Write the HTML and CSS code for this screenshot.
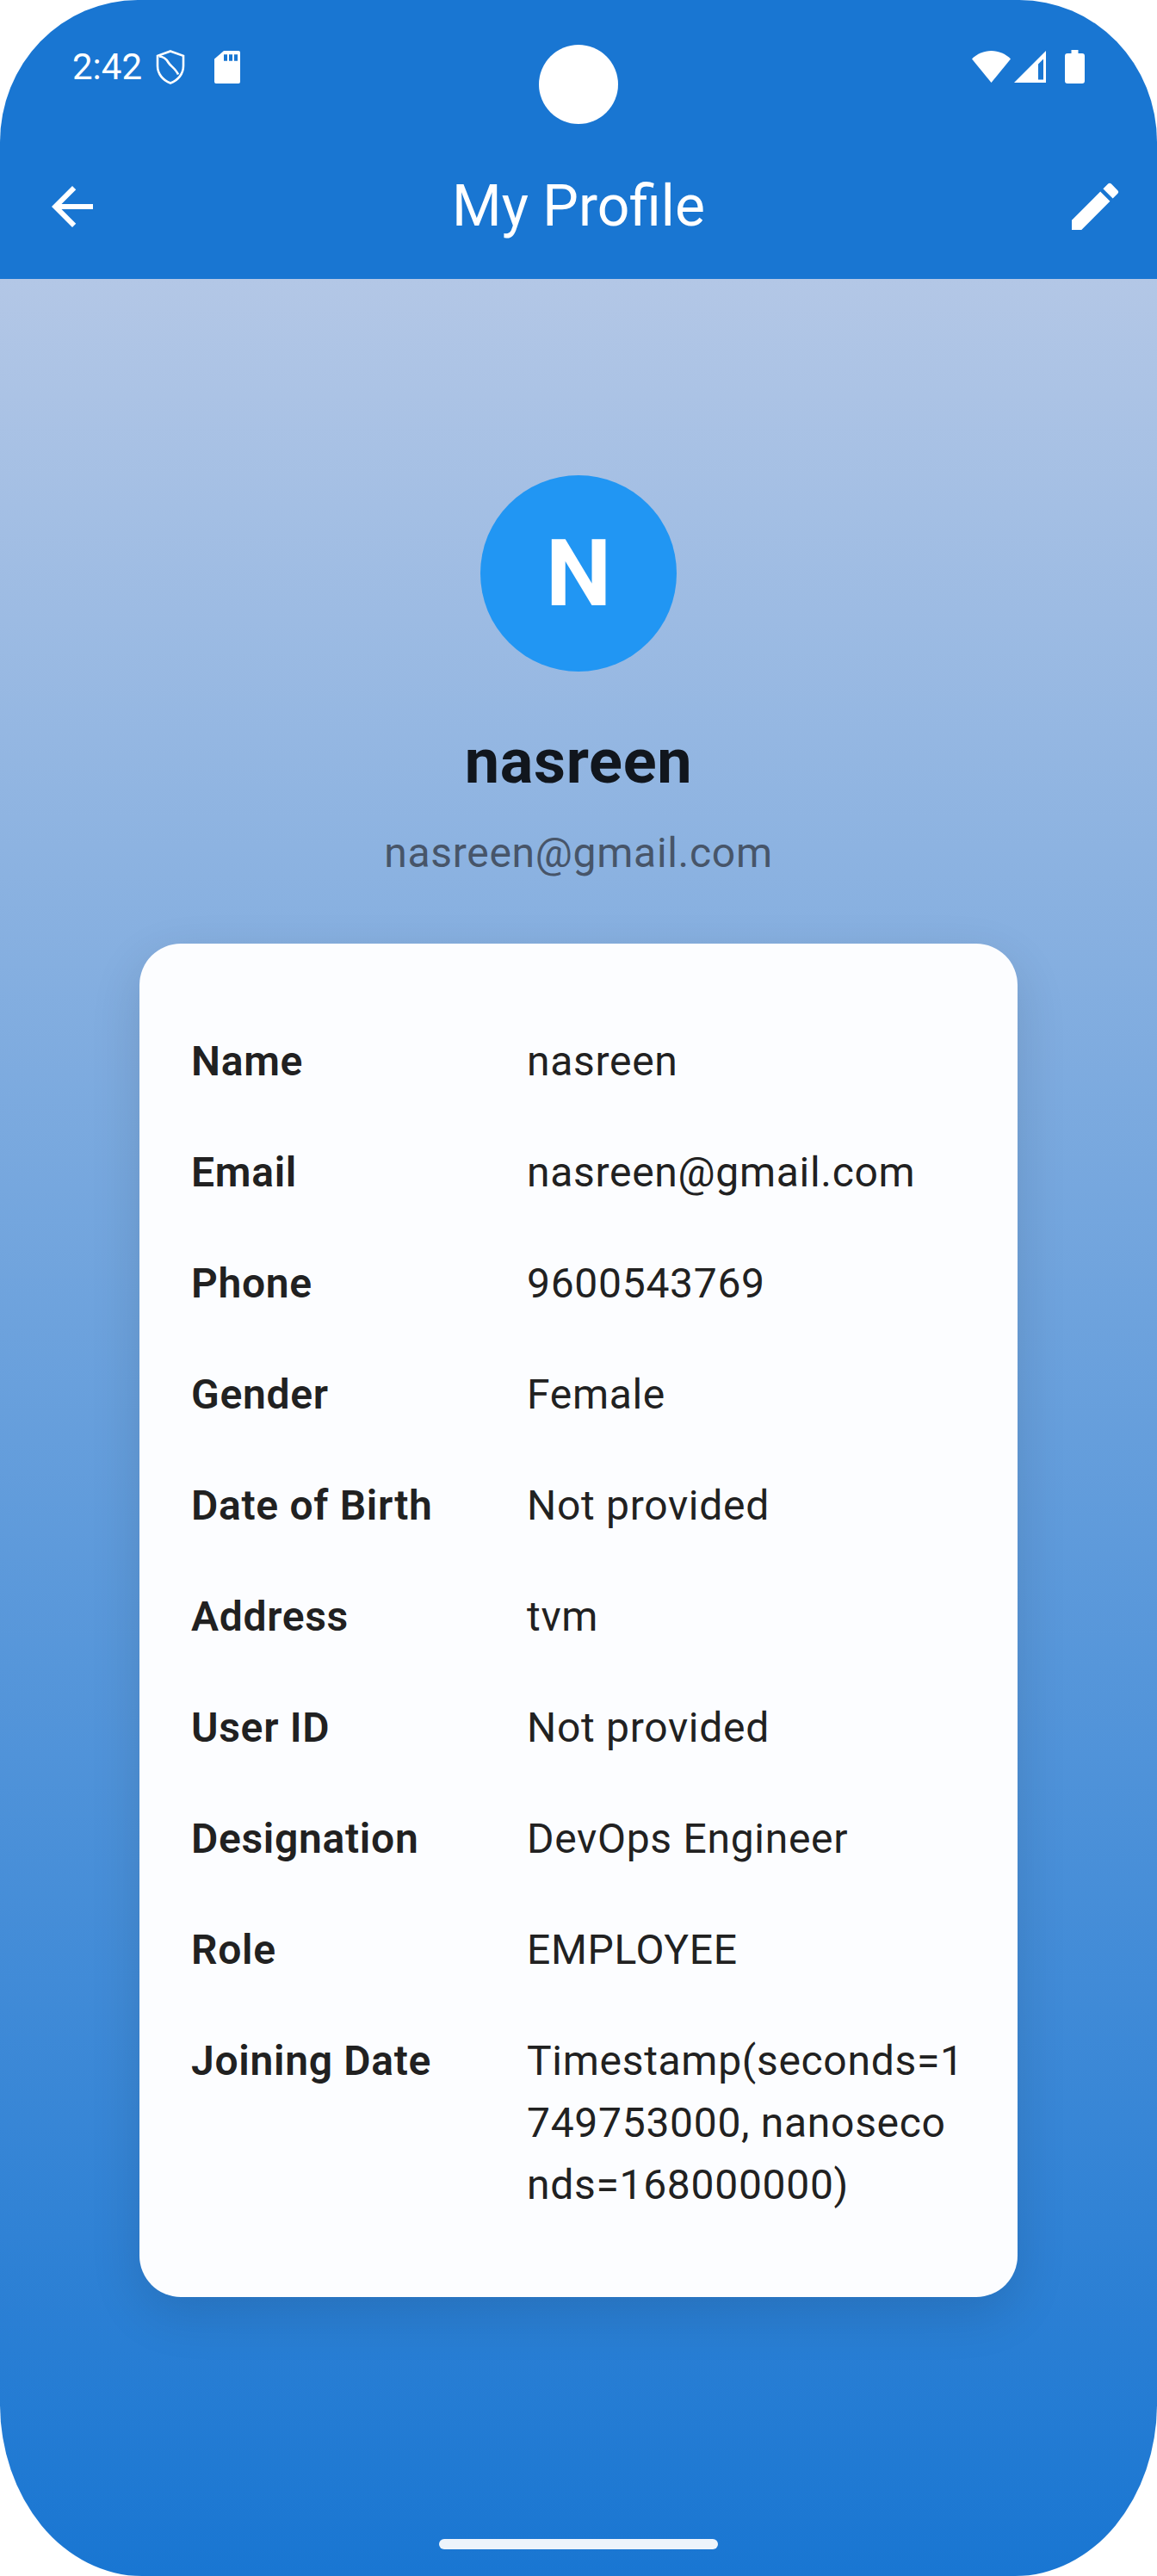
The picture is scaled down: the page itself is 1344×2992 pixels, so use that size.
FILE: index.html
```html
<!DOCTYPE html>
<html lang="en">
<head>
  <meta charset="UTF-8" />
  <title>My Profile</title>
  <link rel="stylesheet" href="styles.css">
</head>
<body>
  <div class="screen">
    <header class="topbar">
      <div class="status">
        <div class="status-left">
          <span class="time">2:42</span>
          <svg class="shield" width="34" height="40" viewBox="0 0 34 40"><path d="M17 1.500l15 5.300v11.700c0 9.500-6.300 16.800-15 20-8.700-3.200-15-10.500-15-20V6.800z M4 7.500c5 .3 8 2.500 10.500 7 2.500 4.300 8.500 7 11.500 14" fill="none" stroke="#fff" stroke-width="2.600"/></svg>
          <svg class="sd" width="30" height="38" viewBox="0 0 30 38"><path fill="#fff" fill-rule="evenodd" d="M11 0h17a2 2 0 0 1 2 2v34a2 2 0 0 1-2 2H2a2 2 0 0 1-2-2V9.500z M11 4.300v7.400h4V4.300z M17 4.300v7.400h4V4.300z M23 4.300v7.400h4V4.300z"/></svg>
        </div>
        <div class="status-right">
          <svg width="45" height="37" viewBox="0 0 45 37"><path fill="#fff" d="M0 9.500C6 3.500 14 0 22.500 0S39 3.500 45 9.500L22.500 37z"/></svg>
          <svg width="37" height="37" viewBox="0 0 37 37"><path fill="#fff" fill-rule="evenodd" d="M37 0v37H0z M34 9.500L28 15.500V33.500h6z"/></svg>
          <svg class="battery" width="23" height="39" viewBox="0 0 23 39"><path fill="#fff" d="M7.500 0h8v4H20a3 3 0 0 1 3 3v29a3 3 0 0 1-3 3H3a3 3 0 0 1-3-3V7a3 3 0 0 1 3-3h4.500z"/></svg>
        </div>
      </div>
      <div class="appbar">
        <svg width="72" height="72" viewBox="0 0 24 24"><path fill="#fff" d="M20 11H7.830l5.590-5.590L12 4l-8 8 8 8 1.410-1.410L7.830 13H20v-2z"/></svg>
        <h1>My Profile</h1>
        <svg width="72" height="72" viewBox="0 0 24 24"><path fill="#fff" d="M3 17.250V21h3.750L17.810 9.940l-3.750-3.750L3 17.250zM20.710 7.040a.996.996 0 0 0 0-1.410l-2.340-2.340a.996.996 0 0 0-1.410 0l-1.830 1.830 3.750 3.750 1.830-1.830z"/></svg>
      </div>
      <div class="camera"></div>
    </header>

    <main class="content">
      <div class="avatar">N</div>
      <h2 class="name">nasreen</h2>
      <p class="email">nasreen@gmail.com</p>

      <section class="card">
        <div class="row"><span class="label">Name</span><span class="value">nasreen</span></div>
        <div class="row"><span class="label">Email</span><span class="value">nasreen@gmail.com</span></div>
        <div class="row"><span class="label">Phone</span><span class="value">9600543769</span></div>
        <div class="row"><span class="label">Gender</span><span class="value">Female</span></div>
        <div class="row"><span class="label">Date of Birth</span><span class="value">Not provided</span></div>
        <div class="row"><span class="label">Address</span><span class="value">tvm</span></div>
        <div class="row"><span class="label">User ID</span><span class="value">Not provided</span></div>
        <div class="row"><span class="label">Designation</span><span class="value">DevOps Engineer</span></div>
        <div class="row"><span class="label">Role</span><span class="value">EMPLOYEE</span></div>
        <div class="row"><span class="label">Joining Date</span><span class="value">Timestamp(seconds=1<br>749753000, nanoseco<br>nds=168000000)</span></div>
      </section>
      <div class="home-bar"></div>
    </main>
  </div>
</body>
</html>
```

FILE: styles.css
```css
* {
  box-sizing: border-box;
}

body {
  margin: 0;
  background: #fff;
  font-family: Roboto, sans-serif;
}

.screen {
  position: relative;
  width: 1344px;
  height: 2992px;
  border-radius: 160px 160px 165px 165px / 165px 165px 200px 200px;
  overflow: hidden;
  display: flex;
  flex-direction: column;
}

.topbar {
  position: relative;
  height: 324px;
  background: #1976d2;
  color: #fff;
  flex-shrink: 0;
}

.status {
  height: 156px;
  padding: 58px 84px 0;
  display: flex;
  justify-content: space-between;
  align-items: flex-start;
}

.status-left,
.status-right {
  display: flex;
  align-items: center;
}

.time {
  font-size: 42px;
  line-height: 38px;
  margin-right: 16px;
}

.shield {
  margin-right: 34px;
}

.status-right svg {
  margin-left: 4px;
}

.status-right .battery {
  margin-left: 22px;
}

.appbar {
  height: 168px;
  padding: 0 36px 0 48px;
  display: flex;
  align-items: center;
}

.appbar h1 {
  flex: 1;
  margin: 0;
  padding-right: 12px;
  text-align: center;
  font-size: 66px;
  line-height: 76px;
  font-weight: 400;
}

.camera {
  position: absolute;
  left: 626px;
  top: 52px;
  width: 92px;
  height: 92px;
  border-radius: 50%;
  background: #fff;
}

.content {
  position: relative;
  flex: 1;
  background: linear-gradient(to bottom, #b3c7e6, #1976d2);
  padding-top: 228px;
  display: flex;
  flex-direction: column;
  align-items: center;
}

.avatar {
  width: 228px;
  height: 228px;
  border-radius: 50%;
  background: #2196f3;
  color: #fff;
  font-size: 108px;
  font-weight: 700;
  display: flex;
  align-items: center;
  justify-content: center;
}

.name {
  margin: 65px 0 0;
  font-size: 72px;
  line-height: 80px;
  font-weight: 700;
  letter-spacing: 0.7px;
  color: #11161d;
}

.email {
  margin: 36px 0 0;
  font-size: 48px;
  line-height: 60px;
  color: #475569;
  letter-spacing: 0.7px;
}

.card {
  width: 1020px;
  margin-top: 75px;
  padding: 101px 60px 94px;
  background: #fcfdff;
  border-radius: 48px;
  box-shadow: 0 20px 60px rgba(0, 0, 0, 0.12);
}

.row {
  display: flex;
  font-size: 48px;
  line-height: 72px;
  letter-spacing: 0.7px;
  margin-bottom: 57px;
}

.row:last-child {
  margin-bottom: 0;
}

.label {
  width: 390px;
  flex-shrink: 0;
  font-weight: 600;
  color: #212121;
}

.value {
  color: #212121;
}

.home-bar {
  position: absolute;
  left: 510px;
  bottom: 31px;
  width: 324px;
  height: 12px;
  border-radius: 6px;
  background: #eef4fb;
}
```
